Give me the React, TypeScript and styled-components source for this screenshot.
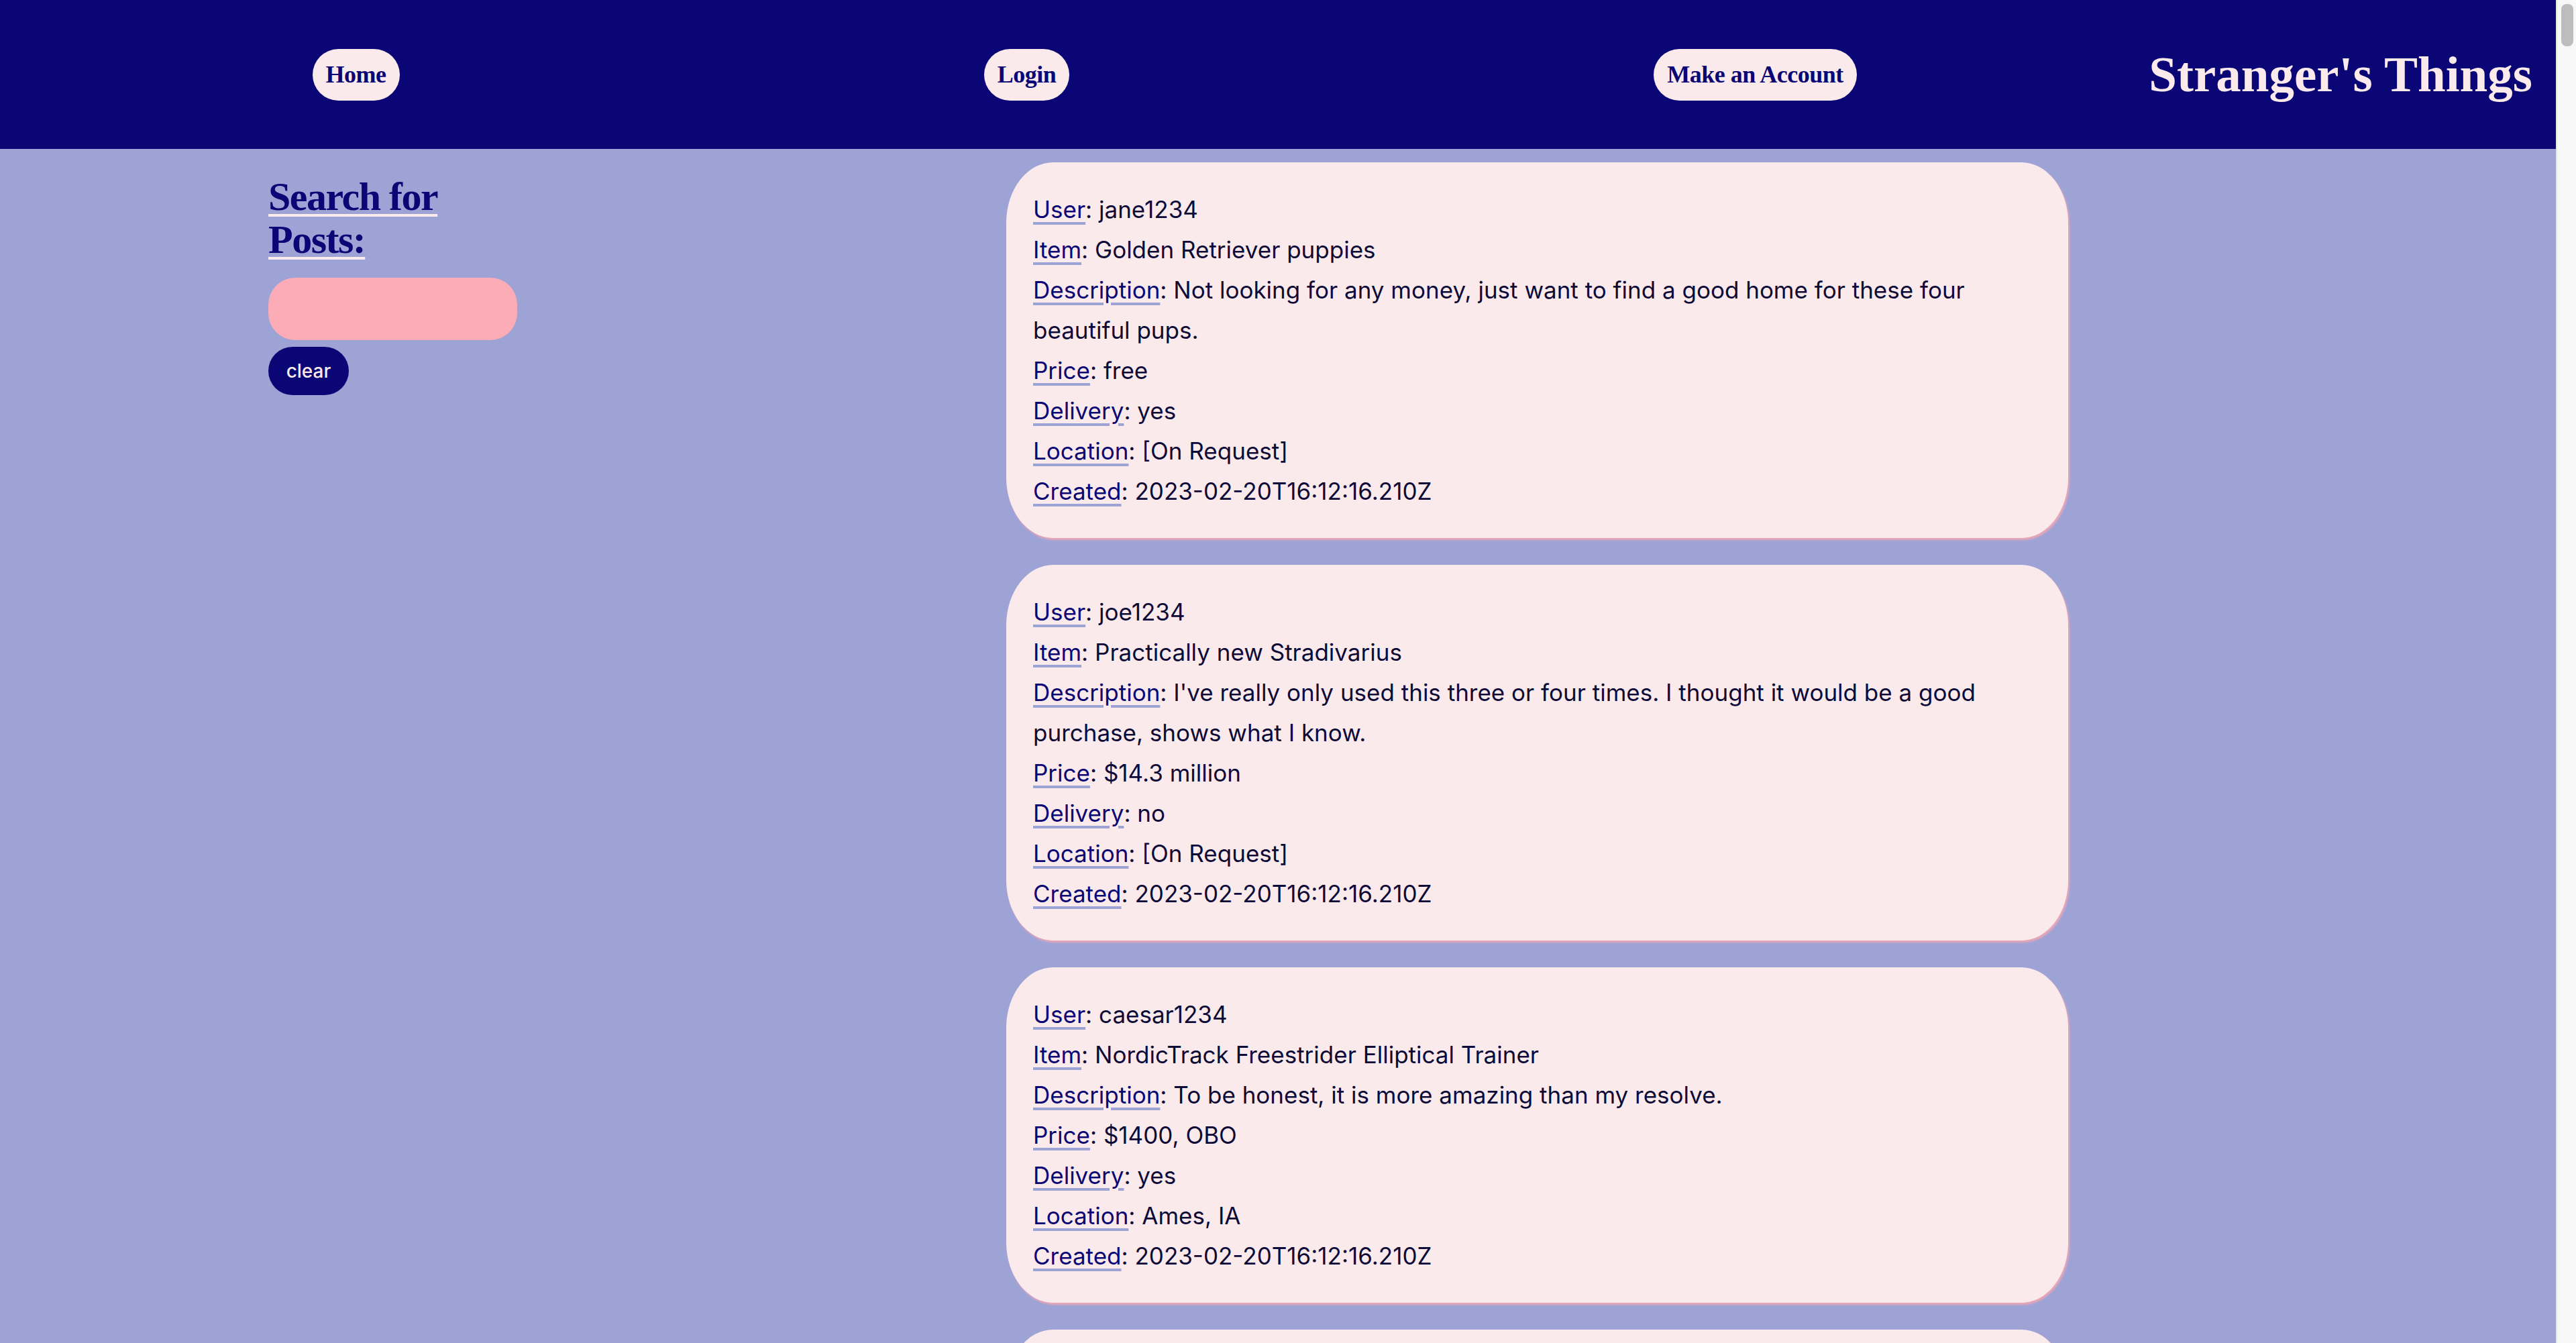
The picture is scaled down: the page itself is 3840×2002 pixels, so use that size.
import React from "react";
import styled, { createGlobalStyle } from "styled-components";

const GlobalStyle = createGlobalStyle`
  html, body {
    margin: 0;
    padding: 0;
    background: #9ea3d6;
  }
  body {
    font-family: Inter, "DejaVu Sans", sans-serif;
    color: #0f0c3e;
  }
  #root {
    margin-right: 30px;
  }
`;

const NAVY = "#0b0675";
const PINK_LIGHT = "#fbeaec";

const ScrollTrack = styled.div`
  position: fixed;
  top: 0;
  right: 0;
  width: 28px;
  height: 100vh;
  background: #f8f8f8;
  border-left: 2px solid #e6e6e6;
  z-index: 10;
`;

const ScrollThumb = styled.div`
  margin: 6px 4px 0 6px;
  height: 63px;
  border-radius: 8px;
  background: #bdbdbd;
`;

const Header = styled.header`
  height: 222px;
  background: ${NAVY};
  display: flex;
  align-items: center;
  padding: 0 35px 0 30px;
  box-sizing: border-box;
`;

const NavLinks = styled.nav`
  flex: 1;
  display: flex;
  justify-content: space-around;
  align-items: center;
`;

const NavButton = styled.a`
  display: inline-flex;
  align-items: center;
  height: 77px;
  padding: 0 20px;
  border-radius: 39px;
  background: ${PINK_LIGHT};
  color: ${NAVY};
  font-family: "Liberation Serif", "Times New Roman", serif;
  font-weight: 700;
  font-size: 36px;
  letter-spacing: -0.5px;
  text-decoration: none;
  cursor: pointer;
`;

const Title = styled.h1`
  margin: 0;
  font-family: "Liberation Serif", "Times New Roman", serif;
  font-weight: 700;
  font-size: 75px;
  color: ${PINK_LIGHT};
  white-space: nowrap;
`;

const Main = styled.main`
  display: flex;
  align-items: flex-start;
  padding: 20px 0 0 400px;
`;

const Sidebar = styled.aside`
  width: 371px;
  flex-shrink: 0;
  margin-right: 729px;
  display: flex;
  flex-direction: column;
  align-items: flex-start;
`;

const SearchHeading = styled.h2`
  margin: 19px 0 25px;
  font-family: "Liberation Serif", "Times New Roman", serif;
  font-weight: 700;
  font-size: 60px;
  line-height: 64px;
  letter-spacing: -1.5px;
  color: ${NAVY};
  width: 280px;
  text-decoration: underline;
  text-decoration-color: ${PINK_LIGHT};
  text-decoration-thickness: 4px;
  text-underline-offset: 6px;
`;

const SearchInput = styled.input`
  width: 371px;
  height: 93px;
  box-sizing: border-box;
  border: none;
  outline: none;
  border-radius: 40px;
  background: #fcacb7;
  padding: 0 30px;
  font-family: inherit;
  font-size: 30px;
  color: ${NAVY};
`;

const ClearButton = styled.button`
  margin-top: 10px;
  width: 120px;
  height: 72px;
  border: none;
  border-radius: 36px;
  background: ${NAVY};
  color: ${PINK_LIGHT};
  font-family: Inter, "DejaVu Sans", sans-serif;
  font-size: 28px;
  font-weight: 500;
  cursor: pointer;
`;

const PostList = styled.section`
  width: 1583px;
  display: flex;
  flex-direction: column;
  gap: 40px;
  padding-bottom: 40px;
`;

const Card = styled.article`
  background: ${PINK_LIGHT};
  border-radius: 70px / 90px;
  padding: 40px 40px;
  box-shadow: 2px 3px 3px #eba7b8;
`;

const Field = styled.div`
  font-size: 35px;
  line-height: 60px;
  color: #0d0a38;
`;

const Label = styled.a`
  color: ${NAVY};
  text-decoration: underline;
  text-decoration-color: #9ea3d6;
  text-decoration-thickness: 4px;
  text-underline-offset: 6px;
  cursor: pointer;
`;

type Post = {
  user: string;
  item: string;
  description: string;
  price: string;
  delivery: string;
  location: string;
  created: string;
};

const posts: Post[] = [
  {
    user: "jane1234",
    item: "Golden Retriever puppies",
    description:
      "Not looking for any money, just want to find a good home for these four beautiful pups.",
    price: "free",
    delivery: "yes",
    location: "[On Request]",
    created: "2023-02-20T16:12:16.210Z",
  },
  {
    user: "joe1234",
    item: "Practically new Stradivarius",
    description:
      "I've really only used this three or four times. I thought it would be a good purchase, shows what I know.",
    price: "$14.3 million",
    delivery: "no",
    location: "[On Request]",
    created: "2023-02-20T16:12:16.210Z",
  },
  {
    user: "caesar1234",
    item: "NordicTrack Freestrider Elliptical Trainer",
    description: "To be honest, it is more amazing than my resolve.",
    price: "$1400, OBO",
    delivery: "yes",
    location: "Ames, IA",
    created: "2023-02-20T16:12:16.210Z",
  },
  {
    user: "ellie1234",
    item: "Vintage Record Player",
    description: "Works great, just don't have room for it anymore.",
    price: "$80",
    delivery: "no",
    location: "[On Request]",
    created: "2023-02-20T16:12:16.210Z",
  },
];

const fields: { key: keyof Post; label: string }[] = [
  { key: "user", label: "User" },
  { key: "item", label: "Item" },
  { key: "description", label: "Description" },
  { key: "price", label: "Price" },
  { key: "delivery", label: "Delivery" },
  { key: "location", label: "Location" },
  { key: "created", label: "Created" },
];

export default function App() {
  return (
    <>
      <GlobalStyle />
      <Header>
        <NavLinks>
          <NavButton>Home</NavButton>
          <NavButton>Login</NavButton>
          <NavButton>Make an Account</NavButton>
        </NavLinks>
        <Title>Stranger's Things</Title>
      </Header>
      <Main>
        <Sidebar>
          <SearchHeading>Search for Posts:</SearchHeading>
          <SearchInput type="text" />
          <ClearButton>clear</ClearButton>
        </Sidebar>
        <PostList>
          {posts.map((p, i) => (
            <Card key={i}>
              {fields.map((f) => (
                <Field key={f.key}>
                  <Label>{f.label}</Label>: {p[f.key]}
                </Field>
              ))}
            </Card>
          ))}
        </PostList>
      </Main>
      <ScrollTrack>
        <ScrollThumb />
      </ScrollTrack>
    </>
  );
}
